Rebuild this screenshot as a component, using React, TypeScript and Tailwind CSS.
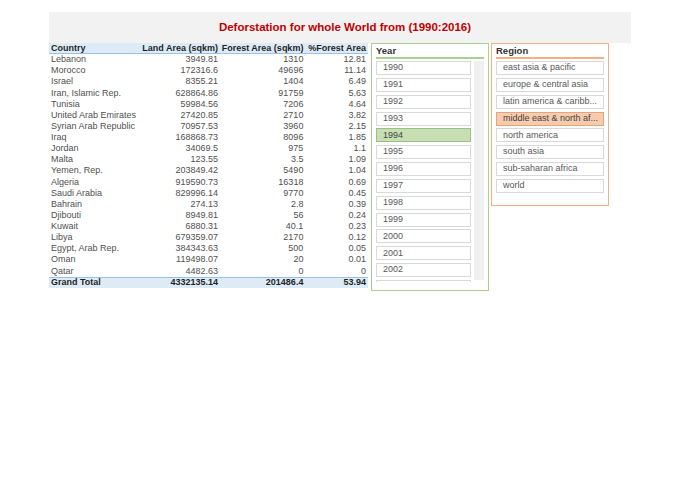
import React from "react";

const rows: [string, string, string, string][] = [
  ["Lebanon", "3949.81", "1310", "12.81"],
  ["Morocco", "172316.6", "49696", "11.14"],
  ["Israel", "8355.21", "1404", "6.49"],
  ["Iran, Islamic Rep.", "628864.86", "91759", "5.63"],
  ["Tunisia", "59984.56", "7206", "4.64"],
  ["United Arab Emirates", "27420.85", "2710", "3.82"],
  ["Syrian Arab Republic", "70957.53", "3960", "2.15"],
  ["Iraq", "168868.73", "8096", "1.85"],
  ["Jordan", "34069.5", "975", "1.1"],
  ["Malta", "123.55", "3.5", "1.09"],
  ["Yemen, Rep.", "203849.42", "5490", "1.04"],
  ["Algeria", "919590.73", "16318", "0.69"],
  ["Saudi Arabia", "829996.14", "9770", "0.45"],
  ["Bahrain", "274.13", "2.8", "0.39"],
  ["Djibouti", "8949.81", "56", "0.24"],
  ["Kuwait", "6880.31", "40.1", "0.23"],
  ["Libya", "679359.07", "2170", "0.12"],
  ["Egypt, Arab Rep.", "384343.63", "500", "0.05"],
  ["Oman", "119498.07", "20", "0.01"],
  ["Qatar", "4482.63", "0", "0"],
];

const years = [
  "1990", "1991", "1992", "1993", "1994", "1995", "1996", "1997", "1998",
  "1999", "2000", "2001", "2002", "",
];

const regions = [
  "east asia & pacific",
  "europe & central asia",
  "latin america & caribb...",
  "middle east & north af...",
  "north america",
  "south asia",
  "sub-saharan africa",
  "world",
];

function Row({
  cells,
  kind,
}: {
  cells: [string, string, string, string];
  kind: "head" | "body" | "total";
}) {
  const base =
    kind === "head"
      ? "bg-[#ddebf7] border-b border-[#9bc2e6] font-bold text-[#1f1f1f]"
      : kind === "total"
      ? "bg-[#ddebf7] border-t border-[#9bc2e6] font-bold text-[#1f1f1f]"
      : "text-[#505050]";
  return (
    <div className={`flex h-[11.14px] items-center pl-[2px] pr-[2px] leading-[11px] ${base}`}>
      <div className="w-[88px] whitespace-nowrap">{cells[0]}</div>
      <div className="w-[80px] text-right whitespace-nowrap">{cells[1]}</div>
      <div className="w-[86px] text-right whitespace-nowrap">{cells[2]}</div>
      <div className="w-[63px] text-right whitespace-nowrap">{cells[3]}</div>
    </div>
  );
}

export default function App() {
  return (
    <div
      className="w-[680px] h-[481px] bg-white pl-[49px] pt-[12px]"
      style={{ fontFamily: '"Liberation Sans", Arial, sans-serif' }}
    >
      <div className="w-[582px] h-[31px] bg-[#f2f2f2] flex items-center justify-center pl-[10px] pt-[1px] text-[11.5px] font-bold text-[#c00000]">
        Deforstation for whole World from (1990:2016)
      </div>
      <div className="flex items-start">
        <div className="w-[319px] text-[9px]">
          <Row cells={["Country", "Land Area (sqkm)", "Forest Area (sqkm)", "%Forest Area"]} kind="head" />
          {rows.map((r) => (
            <Row key={r[0]} cells={r} kind="body" />
          ))}
          <Row cells={["Grand Total", "4332135.14", "201486.4", "53.94"]} kind="total" />
        </div>

        <div className="ml-[3px] w-[118px] h-[248px] border border-[#a9d08e] px-[4px] flex flex-col">
          <div className="h-[15px] flex items-center pt-[2px] text-[9.5px] font-bold text-[#333] border-b-2 border-[#a9d08e]">
            Year
          </div>
          <div className="mt-[2px] flex h-[221px] gap-[3px] overflow-hidden">
            <div className="w-[95px] flex flex-col gap-[2.85px] overflow-hidden">
              {years.map((y, i) => (
                <div
                  key={i}
                  className={`h-[14px] shrink-0 flex items-center pl-[6px] text-[9px] border ${
                    y === "1994"
                      ? "bg-[#c6e0b4] border-[#9cbf85] text-[#444]"
                      : "bg-white border-[#d9d9d9] text-[#595959]"
                  }`}
                >
                  {y}
                </div>
              ))}
            </div>
            <div className="w-[10px] h-[219px] bg-[#f0f0f0]" />
          </div>
        </div>

        <div className="ml-[2px] w-[118px] h-[163px] border border-[#f4b084] px-[4px] flex flex-col">
          <div className="h-[15px] flex items-center pt-[2px] text-[9.5px] font-bold text-[#333] border-b-2 border-[#f4b084]">
            Region
          </div>
          <div className="mt-[2px] flex flex-col gap-[2.85px]">
            {regions.map((r) => (
              <div
                key={r}
                className={`h-[14px] flex items-center pl-[6px] text-[9px] whitespace-nowrap border ${
                  r.startsWith("middle")
                    ? "bg-[#f8cbad] border-[#e3a57c] text-[#444]"
                    : "bg-white border-[#d9d9d9] text-[#595959]"
                }`}
              >
                {r}
              </div>
            ))}
          </div>
        </div>
      </div>
    </div>
  );
}
